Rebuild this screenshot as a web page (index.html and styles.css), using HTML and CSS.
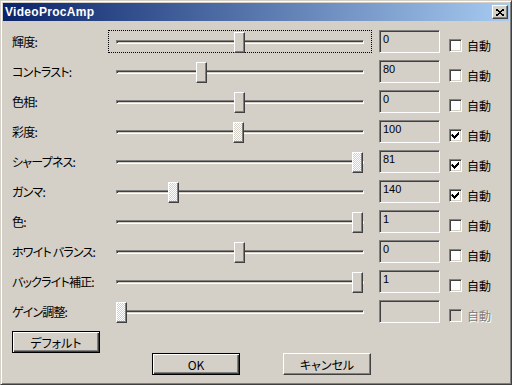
FILE: index.html
```html
<!DOCTYPE html>
<html lang="ja">
<head>
<meta charset="UTF-8">
<title>VideoProcAmp</title>
<link rel="stylesheet" href="styles.css">
</head>
<body>

<div class="window">
    <div class="titlebar">
        <span class="title">VideoProcAmp</span>
        <button class="close-btn">
            <svg width="8" height="7" viewBox="0 0 8 7"><path d="M0 0.5 L7 6.5 M1 0.5 L8 6.5 M7 0.5 L0 6.5 M8 0.5 L1 6.5" stroke="#000" stroke-width="1" fill="none" shape-rendering="crispEdges"/></svg>
        </button>
    </div>

    <div class="client">
        <!-- one row per property -->
        <div class="prop-row">
            <span class="prop-label">輝度:</span>
            <div class="slider focused"><div class="track"></div><div class="thumb" style="left: 126px"></div></div>
            <div class="edit">0</div>
            <label class="auto"><span class="check"></span>自動</label>
        </div>
        <div class="prop-row">
            <span class="prop-label">コントラスト:</span>
            <div class="slider"><div class="track"></div><div class="thumb" style="left: 88px"></div></div>
            <div class="edit">80</div>
            <label class="auto"><span class="check"></span>自動</label>
        </div>
        <div class="prop-row">
            <span class="prop-label">色相:</span>
            <div class="slider"><div class="track"></div><div class="thumb" style="left: 126px"></div></div>
            <div class="edit">0</div>
            <label class="auto"><span class="check"></span>自動</label>
        </div>
        <div class="prop-row">
            <span class="prop-label">彩度:</span>
            <div class="slider"><div class="track"></div><div class="thumb disabled" style="left: 125px"></div></div>
            <div class="edit">100</div>
            <label class="auto"><span class="check checked"></span>自動</label>
        </div>
        <div class="prop-row">
            <span class="prop-label">シャープネス:</span>
            <div class="slider"><div class="track"></div><div class="thumb disabled" style="left: 244px"></div></div>
            <div class="edit">81</div>
            <label class="auto"><span class="check checked"></span>自動</label>
        </div>
        <div class="prop-row">
            <span class="prop-label">ガンマ:</span>
            <div class="slider"><div class="track"></div><div class="thumb disabled" style="left: 60px"></div></div>
            <div class="edit">140</div>
            <label class="auto"><span class="check checked"></span>自動</label>
        </div>
        <div class="prop-row">
            <span class="prop-label">色:</span>
            <div class="slider"><div class="track"></div><div class="thumb" style="left: 244px"></div></div>
            <div class="edit">1</div>
            <label class="auto"><span class="check"></span>自動</label>
        </div>
        <div class="prop-row">
            <span class="prop-label">ホワイト バランス:</span>
            <div class="slider"><div class="track"></div><div class="thumb" style="left: 126px"></div></div>
            <div class="edit">0</div>
            <label class="auto"><span class="check"></span>自動</label>
        </div>
        <div class="prop-row">
            <span class="prop-label">バックライト補正:</span>
            <div class="slider"><div class="track"></div><div class="thumb" style="left: 244px"></div></div>
            <div class="edit">1</div>
            <label class="auto"><span class="check"></span>自動</label>
        </div>
        <div class="prop-row">
            <span class="prop-label">ゲイン調整:</span>
            <div class="slider"><div class="track"></div><div class="thumb disabled" style="left: 8px"></div></div>
            <div class="edit"></div>
            <label class="auto disabled"><span class="check"></span>自動</label>
        </div>

        <div class="default-row">
            <button class="btn default">デフォルト</button>
        </div>
        <div class="button-row">
            <button class="btn default">OK</button>
            <button class="btn">キャンセル</button>
        </div>
    </div>
</div>

</body>
</html>
```

FILE: styles.css
```css
body {
    margin: 0;
    padding: 0;
    background-color: #d4d0c8;
    font-family: "Noto Sans CJK JP", "Liberation Sans", sans-serif;
    font-size: 12px;
    color: #000;
}
.window {
    width: 512px;
    height: 385px;
    box-sizing: border-box;
    border: 1px solid;
    border-color: #d4d0c8 #404040 #404040 #d4d0c8;
    box-shadow: inset 1px 1px #fff, inset -1px -1px #808080;
    padding: 2px;
    background-color: #d4d0c8;
    display: flex;
    flex-direction: column;
}
.titlebar {
    height: 18px;
    display: flex;
    align-items: center;
    justify-content: space-between;
    padding-left: 2px;
    background: linear-gradient(to right, #0a246a, #a6caf0);
}
.title {
    font-family: "Liberation Sans", Arial, sans-serif;
    font-weight: bold;
    font-size: 12px;
    letter-spacing: 0.3px;
    color: #fff;
}
.close-btn {
    width: 16px;
    height: 14px;
    margin-right: 1px;
    padding: 0;
    display: flex;
    align-items: center;
    justify-content: center;
    background-color: #d4d0c8;
    border: 1px solid;
    border-color: #fff #404040 #404040 #fff;
    box-shadow: inset -1px -1px #808080;
}
.client {
    flex: 1;
    padding: 9px 0 0 9px;
    display: flex;
    flex-direction: column;
}
.prop-row {
    display: flex;
    height: 23px;
    margin-bottom: 7px;
    align-items: center;
}
.prop-label {
    width: 96px;
    font-feature-settings: "palt";
    letter-spacing: -0.8px;
}
.slider {
    position: relative;
    width: 264px;
    height: 23px;
    box-sizing: border-box;
}
.slider.focused {
    outline: 1px dotted #000;
    outline-offset: -1px;
}
.track {
    position: absolute;
    left: 8px;
    right: 8px;
    top: 10px;
    height: 4px;
    box-sizing: border-box;
    border: 1px solid;
    border-color: #808080 #fff #fff #808080;
    box-shadow: inset 1px 1px #404040, inset -1px -1px #d4d0c8;
}
.thumb {
    position: absolute;
    top: 2px;
    width: 11px;
    height: 21px;
    box-sizing: border-box;
    background-color: #d4d0c8;
    border: 1px solid;
    border-color: #fff #404040 #404040 #fff;
    box-shadow: inset -1px -1px #808080;
}
.thumb.disabled {
    background-color: #fff;
    background-image: repeating-conic-gradient(#d4d0c8 0 25%, #fff 0 50%);
    background-size: 2px 2px;
}
.edit {
    width: 61px;
    height: 23px;
    margin-left: 7px;
    box-sizing: border-box;
    border: 1px solid;
    border-color: #808080 #fff #fff #808080;
    box-shadow: inset 1px 1px #404040, inset -1px -1px #d4d0c8;
    padding: 2px 0 0 3px;
    font-family: "Liberation Sans", Arial, sans-serif;
    font-size: 11px;
    line-height: 12px;
    color: #000;
    align-self: stretch;
}
.auto {
    display: flex;
    align-items: center;
    align-self: flex-end;
    height: 13px;
    line-height: 13px;
    margin-left: 9px;
    margin-bottom: 1px;
    gap: 5px;
}
.auto.disabled {
    color: #808080;
    text-shadow: 1px 1px #fff;
}
.check {
    width: 13px;
    height: 13px;
    box-sizing: border-box;
    border: 1px solid;
    border-color: #808080 #fff #fff #808080;
    box-shadow: inset 1px 1px #404040, inset -1px -1px #d4d0c8;
    background-color: #fff;
}
.auto.disabled .check {
    background-color: #d4d0c8;
}
.check.checked {
    background-image: url("data:image/svg+xml,%3Csvg xmlns='http://www.w3.org/2000/svg' width='11' height='11'%3E%3Cpath d='M2 4h1v1h1v1h1v-1h1v-1h1v-1h1v-1h1v3h-1v1h-1v1h-1v1h-1v1h-1v-1h-1v-1h-1v-1h-1z' fill='%23000'/%3E%3C/svg%3E");
    background-repeat: no-repeat;
    background-position: 0 0;
}
.default-row {
    display: flex;
    margin-top: 1px;
}
.button-row {
    display: flex;
    gap: 43px;
    padding-left: 140px;
}
.btn {
    width: 88px;
    height: 22px;
    padding: 0;
    font-family: "Noto Sans CJK JP", "Liberation Sans", sans-serif;
    font-size: 12px;
    font-feature-settings: "palt";
    color: #000;
    background-color: #d4d0c8;
    border: 1px solid;
    border-color: #fff #404040 #404040 #fff;
    box-shadow: inset -1px -1px #808080;
}
.btn.default {
    border: 1px solid #000;
    box-shadow: inset 1px 1px #fff, inset -1px -1px #404040, inset -2px -2px #808080;
}
```
